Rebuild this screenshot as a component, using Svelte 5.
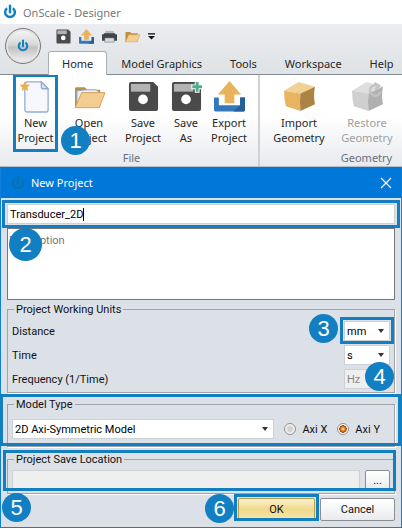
<script lang="ts">
	type Tool = { icon: string; lines: string[]; width: number; disabled?: boolean; step?: number };

	const tabs = ['Home', 'Model Graphics', 'Tools', 'Workspace', 'Help'];
	const quickActions = [
		{ icon: 'save', label: 'Save' },
		{ icon: 'export', label: 'Export' },
		{ icon: 'print', label: 'Print' },
		{ icon: 'folder', label: 'Open' }
	];

	const fileTools: Tool[] = [
		{ icon: 'new', lines: ['New', 'Project'], width: 45, step: 1 },
		{ icon: 'open', lines: ['Open', 'Project'], width: 62 },
		{ icon: 'save', lines: ['Save', 'Project'], width: 46 },
		{ icon: 'saveas', lines: ['Save', 'As'], width: 40 },
		{ icon: 'export', lines: ['Export', 'Project'], width: 46 }
	];
	const geometryTools: Tool[] = [
		{ icon: 'cube', lines: ['Import', 'Geometry'], width: 68 },
		{ icon: 'restore', lines: ['Restore', 'Geometry'], width: 68, disabled: true }
	];

	let activeTab = $state('Home');
	let name = $state('Transducer_2D');
	let description = $state('');
	let distance = $state('mm');
	let time = $state('s');
	let model = $state('2D Axi-Symmetric Model');
	let axis = $state('Y');
	let location = $state('');
</script>

{#snippet power()}
	<svg class="power" viewBox="0 0 16 16" aria-hidden="true">
		<path d="M4.7 3.6a5.6 5.6 0 1 0 6.6 0" fill="none" stroke="currentColor" stroke-width="2.8" />
		<path d="M8 .8v7.4" stroke="currentColor" stroke-width="2.8" stroke-linecap="round" />
	</svg>
{/snippet}

{#snippet glyph(icon: string)}
	<svg viewBox="0 0 32 32" aria-hidden="true">
		{#if icon === 'new'}
			<path d="M8 1h14l7 7v22q0 2-2 2H8q-3 0-3-2V4q0-3 3-3z" fill="#f6f8fd" stroke="#8fabd9" stroke-width="1.3" />
			<path d="M22 1v5q0 2 2 2h5z" fill="#dbe5f6" stroke="#8fabd9" stroke-width="1.3" />
			<path d="M5 0l1.6 3.5 3.8.4-2.8 2.7.8 3.8L5 8.5l-3.4 1.9.8-3.8L-.4 3.9l3.8-.4z" fill="#eaaf50" />
		{:else if icon === 'open' || icon === 'folder'}
			<path d="M1 27V8q0-1.5 1.5-1.5H11L14 9h13v18z" fill="#c28f42" />
			{#if icon === 'open'}
				<path d="M3 10l11-1h9l3 3v10H3z" fill="#e8eefa" stroke="#8fa8d0" />
			{/if}
			<path d="M8 12h24l-6 15.5H1z" fill="#f3cd91" stroke="#d4a156" />
		{:else if icon === 'save' || icon === 'saveas'}
			<path d="M3 1h23l5 5v23q0 2-2 2H3q-2 0-2-2V3q0-2 2-2z" fill="#4a4a4a" />
			<path d="M3 3h20v8H3z" fill="#b3b3b3" />
			<circle cx="15.5" cy="19" r="5" fill="#fff" />
			{#if icon === 'saveas'}
				<path d="M27 0v12M21 6h12" stroke="#fff" stroke-width="5" />
				<path d="M27 1v10M22 6h10" stroke="#4caf8a" stroke-width="3" />
			{/if}
		{:else if icon === 'export'}
			<path d="M0 17h5v8h22v-8h5v13q0 1.5-1.5 1.5h-29Q0 31.5 0 30z" fill="#3478b9" />
			<path d="M27 17h5v13q0 1.5-1.5 1.5H20L27 25z" fill="#255f98" />
			<path d="M16 0l12 14h-7v9H11v-9H4z" fill="#e9b35c" />
		{:else if icon === 'print'}
			<path d="M7 4h18v8H7z" fill="#b4b8bc" />
			<path d="M0 11h4V9h24v2h4v14H0z" fill="#41454a" />
			<path d="M6 19h20v9H6z" fill="#d9dde0" stroke="#55595e" />
		{:else if icon === 'cube'}
			<path d="M0 10L15 1l17 5-15 7z" fill="#f2d195" />
			<path d="M0 10l17 3q-1 9 0 18L2 26q-2-8-2-16z" fill="#e8b460" />
			<path d="M17 13l15-7q-2 9 0 18l-15 7q-1-10 0-18z" fill="#ad8343" />
		{:else if icon === 'restore'}
			<path d="M0 10L15 1l17 5-15 7z" fill="#dedede" />
			<path d="M0 10l17 3q-1 9 0 18L2 26q-2-8-2-16z" fill="#cfcfcf" />
			<path d="M17 13l15-7q-2 9 0 18l-15 7q-1-10 0-18z" fill="#b0b0b0" />
			<path d="M27 5a5.5 5.5 0 1 0 2.5 6M23 2l5 3-4 4" fill="none" stroke="#c3c3c3" stroke-width="2.5" />
		{/if}
	</svg>
{/snippet}

{#snippet toolGroup(title: string, tools: Tool[])}
	<section class="group" aria-label={title}>
		<div class="tools">
			{#each tools as tool}
				<div class="tool-cell">
					<button class="tool" style="width: {tool.width}px" disabled={tool.disabled}>
						{@render glyph(tool.icon)}
						{#each tool.lines as line}
							<span>{line}</span>
						{/each}
					</button>
					{#if tool.step}
						<span class="ring ring-tool"></span>
						<span class="badge badge-tool">{tool.step}</span>
					{/if}
				</div>
			{/each}
		</div>
		<div class="group-title">{title}</div>
	</section>
{/snippet}

<div class="app">
	<header class="titlebar">
		{@render power()}
		<span>OnScale - Designer</span>
	</header>

	<div class="strip">
		<button class="orb" aria-label="Application menu">{@render power()}</button>
		<div class="strip-main">
			<div class="quick">
				{#each quickActions as action}
					<button aria-label={action.label}>{@render glyph(action.icon)}</button>
				{/each}
				<button class="more" aria-label="Customize toolbar">
					<svg viewBox="0 0 8 8"><path d="M0 1h8" stroke="#111" stroke-width="1.5" /><path d="M0 3.5h8L4 7.5z" fill="#111" /></svg>
				</button>
			</div>
			<nav class="tabs">
				{#each tabs as tab}
					<button class:active={activeTab === tab} onclick={() => (activeTab = tab)}>{tab}</button>
				{/each}
			</nav>
		</div>
	</div>

	<div class="ribbon">
		{@render toolGroup('File', fileTools)}
		{@render toolGroup('Geometry', geometryTools)}
	</div>

	<div class="dialog" role="dialog" aria-labelledby="dialog-title">
		<div class="dialog-bar">
			{@render power()}
			<h1 id="dialog-title">New Project</h1>
			<button class="close" aria-label="Close">
				<svg viewBox="0 0 10 10"><path d="M0 0l10 10M10 0L0 10" stroke="#fff" stroke-width="1.2" /></svg>
			</button>
		</div>

		<form class="body" onsubmit={(e) => e.preventDefault()}>
			<div class="marked">
				<input class="name" aria-label="Project name" bind:value={name} />
				<span class="caret"></span>
				<span class="ring ring-name"></span>
				<span class="badge large badge-name">2</span>
			</div>
			<textarea aria-label="Description" placeholder="Description" bind:value={description}></textarea>

			<fieldset class="units">
				<legend>Project Working Units</legend>
				<div class="row">
					<label for="distance">Distance</label>
					<div class="select unit">
						<select id="distance" bind:value={distance}>
							<option>mm</option>
							<option>m</option>
						</select>
						<span class="ring ring-distance"></span>
						<span class="badge badge-distance">3</span>
					</div>
				</div>
				<div class="row">
					<label for="time">Time</label>
					<div class="select unit">
						<select id="time" bind:value={time}>
							<option>s</option>
							<option>ms</option>
						</select>
					</div>
				</div>
				<div class="row">
					<label for="frequency">Frequency (1/Time)</label>
					<div class="unit">
						<input id="frequency" value="Hz" disabled />
						<span class="badge badge-frequency">4</span>
					</div>
				</div>
			</fieldset>

			<div class="marked">
				<fieldset class="model">
					<legend>Model Type</legend>
					<div class="row">
						<div class="select grow">
							<select aria-label="Model type" bind:value={model}>
								<option>2D Axi-Symmetric Model</option>
								<option>3D Model</option>
							</select>
						</div>
						<label class="radio"><input type="radio" name="axis" value="X" bind:group={axis} />Axi X</label>
						<label class="radio"><input type="radio" name="axis" value="Y" bind:group={axis} />Axi Y</label>
					</div>
				</fieldset>
				<span class="ring ring-model"></span>
			</div>

			<div class="marked">
				<fieldset class="save">
					<legend>Project Save Location</legend>
					<div class="row">
						<input class="grow" aria-label="Project save location" readonly bind:value={location} />
						<button type="button" class="btn browse">...</button>
					</div>
				</fieldset>
				<span class="ring ring-save"></span>
				<span class="badge badge-save">5</span>
			</div>

			<div class="actions">
				<div class="marked">
					<button type="submit" class="btn ok">OK</button>
					<span class="ring ring-ok"></span>
					<span class="badge badge-ok">6</span>
				</div>
				<button type="button" class="btn">Cancel</button>
			</div>
		</form>
	</div>
</div>

<style>
	:global(body) {
		margin: 0;
	}

	.app {
		--mark: #127fc3;
		font: 11px/15px 'Noto Sans', 'Open Sans', sans-serif;
		color: #262626;
		background: #fff;
		overflow: hidden;
	}

	.app * {
		box-sizing: border-box;
	}

	button {
		padding: 0;
		border: 0;
		background: none;
		font: inherit;
		color: inherit;
	}

	svg {
		display: block;
		overflow: visible;
	}

	.power {
		width: 14px;
		height: 14px;
		color: #1180c4;
	}

	.titlebar {
		display: flex;
		align-items: center;
		gap: 6px;
		height: 24px;
		padding-left: 3px;
		color: #777;
	}

	/* Quick access strip and tabs */
	.strip {
		display: flex;
		height: 51px;
		border-bottom: 1px solid #7f8b95;
		background: linear-gradient(#ebecf0, #dfe3e5);
	}

	.orb {
		display: grid;
		flex: none;
		place-items: center;
		width: 36px;
		height: 36px;
		margin: 4px 7px 0 5px;
		border: 1px solid #777;
		border-radius: 50%;
		background: linear-gradient(#f8f8f8, #d8d8d8 45%, #c2c2c2 55%, #f4f4f4);
		box-shadow: inset 0 0 0 2px #e4e4e4;
	}

	.orb .power {
		width: 12px;
		height: 12px;
	}

	.strip-main {
		flex: 1;
		min-width: 0;
	}

	.quick {
		display: flex;
		align-items: center;
		gap: 8px;
		height: 27px;
		padding: 0 0 2px 8px;
	}

	.quick svg {
		width: 15px;
		height: 15px;
	}

	.quick .more svg {
		width: 7px;
		height: 7px;
	}

	.tabs {
		display: flex;
		height: 24px;
	}

	.tabs button {
		flex: none;
		height: 24px;
		padding: 0 14px;
		white-space: nowrap;
	}

	.tabs .active {
		border: 1px solid #a8afb5;
		border-bottom: 0;
		border-radius: 3px 3px 0 0;
		background: #fff;
		padding: 0 13px;
	}

	/* Ribbon */
	.ribbon {
		display: flex;
		height: 92px;
		overflow: hidden;
		border-bottom: 1px solid #b9bcc2;
		background: linear-gradient(#fff 45%, #e9eaee);
	}

	.group {
		flex: none;
		width: 260px;
		padding: 5px 8px 0 13px;
		border-right: 2px solid #cfd1d5;
	}

	.group + .group {
		width: 214px;
		padding: 5px 4px 0 5px;
	}

	.tools {
		display: flex;
	}

	.tool-cell {
		position: relative;
	}

	.tool {
		display: flex;
		flex-direction: column;
		align-items: center;
		height: 70px;
	}

	.tool svg {
		width: 31px;
		height: 31px;
		margin: 1px 0 3px;
	}

	.tool:disabled {
		color: #a0a0a0;
	}

	.group-title {
		text-align: center;
		color: #69717d;
	}

	/* Dialog */
	.dialog {
		border: 1px solid #127fd6;
		border-top: 0;
		background: #dce1e8;
		color: #111;
	}

	.dialog-bar {
		display: flex;
		align-items: center;
		gap: 6px;
		height: 31px;
		padding: 0 10px;
		background: #0078d9;
		color: #fff;
	}

	.dialog-bar .power {
		color: #0a70b4;
	}

	h1 {
		flex: 1;
		margin: 0;
		font: inherit;
	}

	.close svg {
		width: 10px;
		height: 10px;
	}

	.body {
		padding: 6px;
		font-family: Roboto, 'Liberation Sans', sans-serif;
	}

	input,
	select,
	textarea {
		display: block;
		width: 100%;
		height: 20px;
		margin: 0;
		padding: 0 2px;
		border: 1px solid #cdd0d4;
		border-radius: 0;
		outline: 0;
		background: #fff;
		color: #000;
		font: inherit;
	}

	textarea {
		height: 72px;
		margin: 4px 0 2px;
		padding: 4px 1px;
		border-color: #777;
		resize: none;
	}

	textarea::placeholder {
		color: #777;
		opacity: 1;
	}

	.marked,
	.unit,
	.select {
		position: relative;
	}

	.caret {
		position: absolute;
		top: 4px;
		left: 76px;
		width: 1px;
		height: 13px;
		background: #000;
	}

	fieldset {
		min-width: 0;
		margin: 0;
		border: 1px solid #a0a3a8;
		box-shadow: 1px 1px #fff;
	}

	legend {
		margin-left: 2px;
		padding: 0 2px;
	}

	.units {
		display: flex;
		flex-direction: column;
		gap: 4px;
		padding: 4px 4px 3px;
	}

	.model {
		margin-top: 4px;
		padding: 7px 14px 7px 4px;
	}

	.save {
		margin-top: 5px;
		padding: 3px 4px;
	}

	.row {
		display: flex;
		align-items: center;
		justify-content: space-between;
	}

	.unit {
		width: 46px;
	}

	.grow {
		flex: 1;
	}

	select {
		appearance: none;
	}

	.select::after {
		content: '';
		position: absolute;
		top: 8px;
		right: 6px;
		border: 3px solid transparent;
		border-top: 4px solid #333;
		border-bottom: 0;
		pointer-events: none;
	}

	input:disabled,
	input[readonly] {
		background: #efefef;
		color: #888;
	}

	.radio {
		display: flex;
		align-items: center;
		gap: 6px;
		margin-left: 10px;
		white-space: nowrap;
	}

	.radio input {
		appearance: none;
		width: 12px;
		height: 12px;
		border: 1px solid #8e8f8f;
		border-radius: 50%;
		background: radial-gradient(#d2d2d2 30%, #f6f6f6 65%);
	}

	.radio input:checked {
		background: radial-gradient(#ffd9a0 8%, #e67a17 28%, #a84b05 50%, #fff 56%);
	}

	.btn {
		width: 75px;
		height: 23px;
		border: 1px solid #8a8d92;
		border-radius: 2px;
		background: linear-gradient(#fff, #f5f6f7 50%, #e8eaed);
	}

	.browse {
		width: 25px;
		height: 20px;
		margin-left: 5px;
	}

	.ok {
		width: 77px;
		border-color: #b89c4a;
		background: linear-gradient(#fbf1cf, #f0d98b 50%, #f7e7b0);
	}

	.actions {
		display: flex;
		justify-content: flex-end;
		gap: 5px;
		margin-top: 4px;
	}

	/* Step outlines and numbers */
	.ring {
		position: absolute;
		z-index: 1;
		border: 3px solid var(--mark);
		pointer-events: none;
	}

	.ring-tool {
		inset: -6px 0 -2px;
	}

	.ring-name {
		inset: -4px -5px;
	}

	.ring-distance {
		inset: -4px -4px -3px;
	}

	.ring-model {
		inset: -3px -6px 1px -7px;
	}

	.ring-save {
		inset: -2px -1px 3px -4px;
	}

	.ring-ok {
		inset: -4px -4px 0;
	}

	.badge {
		position: absolute;
		z-index: 2;
		width: 29px;
		height: 29px;
		border-radius: 50%;
		background: var(--mark);
		color: #fff;
		font: 22px/29px 'Liberation Sans', sans-serif;
		text-align: center;
		pointer-events: none;
	}

	.badge.large {
		width: 33px;
		height: 33px;
		line-height: 33px;
	}

	.badge-tool {
		top: 46px;
		left: 48px;
	}

	.badge-name {
		top: 24px;
		left: 2px;
	}

	.badge-distance {
		top: -7px;
		right: 52px;
	}

	.badge-frequency {
		top: -7px;
		right: -4px;
	}

	.badge-save {
		bottom: -28px;
		left: -5px;
	}

	.badge-ok {
		top: -4px;
		right: 81px;
	}
</style>
